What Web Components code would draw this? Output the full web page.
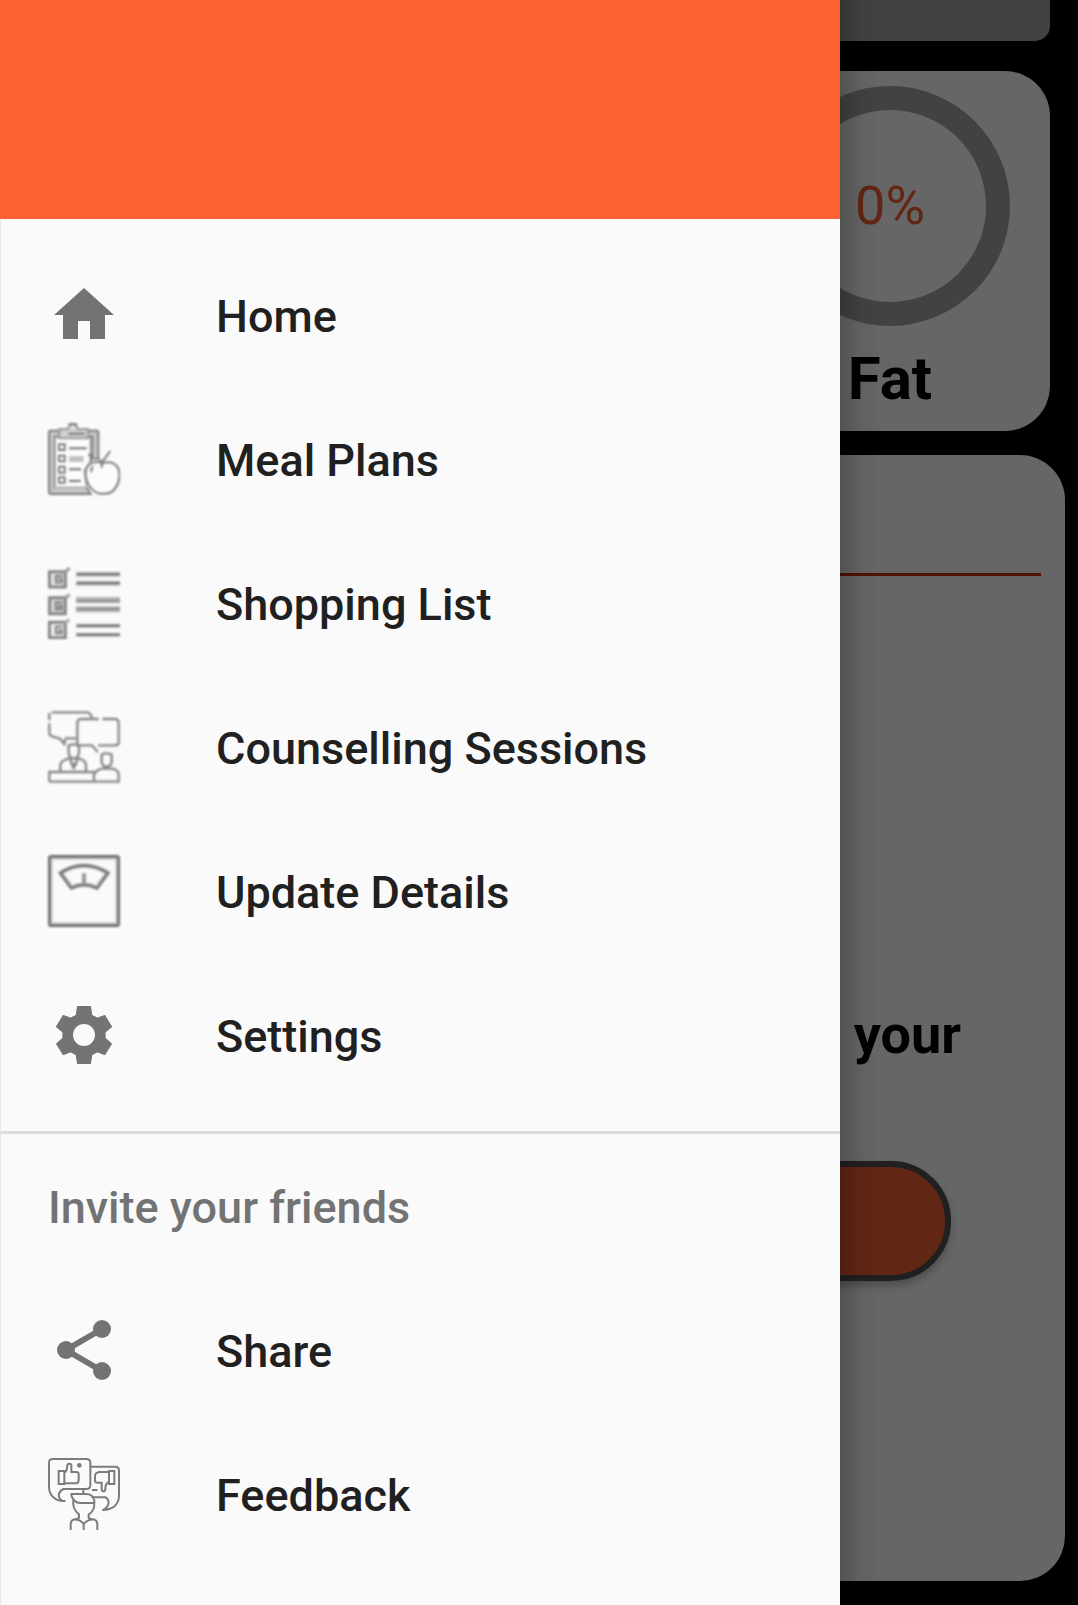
<!DOCTYPE html>
<html lang="en">
<head>
<meta charset="utf-8">
<meta name="viewport" content="width=device-width, initial-scale=1">
<title>Diet Planner</title>
<style>
  html, body { margin: 0; min-height: 100%; background: #000; }
  body { font-family: Roboto, "Liberation Sans", sans-serif; }
</style>
</head>
<body>
<app-shell>
  <dashboard-view></dashboard-view>
  <nav-drawer slot="drawer">
    <nav-item icon="home">Home</nav-item>
    <nav-item icon="meal">Meal Plans</nav-item>
    <nav-item icon="list">Shopping List</nav-item>
    <nav-item icon="talk">Counselling Sessions</nav-item>
    <nav-item icon="scale">Update Details</nav-item>
    <nav-item icon="settings">Settings</nav-item>
    <nav-heading>Invite your friends</nav-heading>
    <nav-item icon="share">Share</nav-item>
    <nav-item icon="feedback">Feedback</nav-item>
  </nav-drawer>
</app-shell>
<script>
const ICONS = {
  home: `<svg viewBox="0 0 24 24"><path fill="#737373" d="M10 20v-6h4v6h5v-8h3L12 3 2 12h3v8z"/></svg>`,
  settings: `<svg viewBox="36 42 216 216"><path fill="#737373" stroke="#737373" stroke-width="4" stroke-linejoin="round" d="M125 65h38l4 26 17 9 22-8 20 33-19 16v19l19 17-20 31-22-8-17 9-4 26h-38l-4-26-17-9-22 8-20-31 19-17v-19l-19-16 20-33 22 8 17-9z"/><circle cx="144" cy="150" r="33" fill="#fafafa"/></svg>`,
  share: `<svg viewBox="0 0 24 24"><path fill="none" stroke="#737373" stroke-width="2" d="M18 5L6 12l12 7"/><g fill="#737373"><circle cx="18" cy="5" r="3"/><circle cx="6" cy="12" r="3"/><circle cx="18" cy="19" r="3"/></g></svg>`,
  meal: `<svg class="soft" viewBox="36 39 216 216">
    <g fill="none" stroke="#7c7c7c" stroke-width="6">
      <path fill="#c6c6c6" d="M39 66q0-4 5-4h138q5 0 5 4v80h-18V80H56v150h94l14 22H45q-6 0-6-6z"/>
      <path fill="#fcfcfc" stroke="#9a9a9a" stroke-width="4" d="M57 82h106v72l-18 28 7 50H57z"/>
      <path stroke="#aaa" d="M57 229l-8 10"/>
      <path fill="#d0d0d0" stroke="#999" d="M70 57h26q3-15 14-15t15 15h31v28H70z"/>
      <path stroke="#777" d="M97 71h49M98 44q10-5 26 0"/>
      <path fill="#fafafa" stroke="none" d="M104 55q6-10 14 0z"/>
      <path d="M69 103h17v17H69zM69 137h17v17H69zM69 170h17v18H69zM69 202h17v16H69z"/>
      <path stroke="#707070" d="M99 115h53M99 178h36M99 213h35"/>
      <path stroke="#c0c0c0" stroke-width="17" d="M99 147h44"/>
      <path fill="#fcfcfc" d="M199 160C180 151 150 158 149 187c-2 31 19 61 45 64 8 1 8-1 16 0 25-1 43-33 40-61-2-30-29-39-51-30z"/>
      <path d="M197 174q-1-17 8-27l18-24M190 148l9 12M156 135h9v20M166 187v-8q0-7 6-9"/>
    </g></svg>`,
  list: `<svg class="soft" viewBox="36 36 216 216">
    <g fill="none" stroke="#858585" stroke-width="9">
      <path fill="#e2e2e2" d="M40 50h48v46H40z"/><path stroke-width="7" d="M80 63H60v19h17v-9H66"/><path stroke="#999" d="M86 52l15-13"/>
      <path fill="#d2d2d2" d="M40 128h48v48H40z"/><path stroke-width="7" d="M80 142H60v20h17v-9H66"/><path stroke="#999" d="M86 130l15-11"/>
      <path fill="#eee" d="M40 202h48v46H40z"/><path stroke-width="7" d="M80 215H60v20h17v-9H66"/><path stroke="#aaa" d="M86 204l14-10"/>
      <path stroke="#c4c4c4" stroke-width="15" d="M120 58h132M120 85h132"/>
      <path stroke="#b4b4b4" stroke-width="18" d="M120 135h132M120 163h132"/>
      <path stroke="#c4c4c4" stroke-width="12" d="M120 212h132M120 239h132"/>
      <path stroke="#666" stroke-width="6" d="M122 58h130M122 85h130M122 212h130M122 239h130"/>
      <path stroke="#8a8a8a" stroke-width="6" d="M122 139h130M122 162h130"/>
    </g></svg>`,
  talk: `<svg class="soft" viewBox="36 33 216 216">
    <g fill="none" stroke="#868686" stroke-width="7">
      <path d="M47 37h107q11 2 14 18M40 39v22M40 70v30q0 7 13 11l19 5 13 16 4-17h31"/>
      <path d="M188 57h-52q-12 0-12 13v66h44l17 20M199 57h37q12 0 12 13v57q0 9-12 9h-50"/>
      <path d="M98 136v20q0 19 15 19t16-19v-20q-15-6-31 0zM73 214v-18q0-15 28-21l12 25 13-25q24 5 24 21v18M104 186l9 18 10-18"/>
      <path d="M197 164q14-8 30 0v23q-3 13-15 13t-15-13zM178 221q4-13 22-15h23q20 0 26 16"/>
      <path d="M40 245V216h134v29M40 245h208v-23"/>
    </g></svg>`,
  scale: `<svg class="soft" viewBox="36 36 216 216">
    <g fill="none">
      <rect x="43" y="43" width="202" height="202" rx="8" stroke="#c8c8c8" stroke-width="14"/>
      <rect x="40" y="40" width="208" height="208" rx="6" stroke="#6c6c6c" stroke-width="8"/>
      <path stroke="#c4c4c4" stroke-width="14" d="M74 90q70-45 141 0l-33 44q-37-19-75 0z"/>
      <path stroke="#707070" stroke-width="7" d="M73 90q71-45 143 0l-33 46q-38-20-77 0z"/>
      <path stroke="#999" stroke-width="12" d="M144 91v33"/>
    </g></svg>`,
  feedback: `<svg viewBox="36 39 216 216"><g fill="none" stroke="#7c7c7c" stroke-width="6" stroke-linecap="round" stroke-linejoin="round">
      <path d="M86 168c-26 2-47-16-47-42V53q0-11 11-11h101q12 0 12 11v67q0 12-12 12H82c-14 7-20 23-4 35"/>
      <path d="M164 65h74q11 0 11 11v75c0 27-18 43-48 44 19-9 22-29 8-38h-40M142 133v14"/>
      <path stroke-linejoin="miter" d="M68 78h17v39H68zM85 83q9-4 9-22 0-5 6-5t6 5v20h15q7 0 7 7v16q0 11-10 11H85M219 78h16v39h-16zM219 81h-30q-12 2-12 13v13q0 6 8 6h12v20q0 6 5 6t6-6c0-14 2-20 11-21"/>
      <path d="M170 135h12"/><circle cx="130" cy="61" r="4" fill="#7c7c7c"/>
      <path d="M106 151q7 22 27 23h42v-7q-3-20-26-20H106zM112 165q-4 27 17 43v9q-2 6-10 6M175 175q1 22-17 34v8q2 6 10 6"/>
      <path stroke-linecap="butt" d="M104 255v-18q1-13 14-14 14 1 25 14 12-13 26-14 14 1 15 14v18M143 237v18"/>
    </g></svg>`
};

function define(name, html, setup) {
  const template = document.createElement('template');
  template.innerHTML = html;
  customElements.define(name, class extends HTMLElement {
    constructor() {
      super();
      this.attachShadow({ mode: 'open' }).append(template.content.cloneNode(true));
    }
    connectedCallback() { if (setup) setup(this, this.shadowRoot); }
  });
}

define('app-shell', `
  <style>
    :host { display: block; position: relative; min-height: 100vh; overflow: hidden; }
    .scrim { position: absolute; inset: 0; background: rgba(0,0,0,.6); }
  </style>
  <slot></slot><div class="scrim"></div><slot name="drawer"></slot>`);

define('nav-drawer', `
  <style>
    :host { position: absolute; top: 0; bottom: 0; left: 0; width: 840px; max-width: calc(100% - 168px); background: #fafafa; }
    :host::after { content: ""; position: absolute; left: 100%; top: 0; bottom: 0; width: 40px;
      background: linear-gradient(90deg, rgba(0,0,0,.2), rgba(0,0,0,.06) 50%, transparent); }
    header { height: 219px; background: #fd6232; }
    nav { box-sizing: border-box; min-height: calc(100% - 219px); padding: 24px 0; box-shadow: inset 1px 0 #e6e6e6; }
  </style>
  <header></header><nav aria-label="Main"><slot></slot></nav>`);

define('nav-item', `
  <style>
    :host { display: block; }
    a { display: flex; align-items: center; gap: 96px; height: 144px; padding: 0 48px; color: #202020;
      font-size: 45px; font-weight: 500; line-height: 60px; text-decoration: none; }
    .icon { flex: none; width: 72px; height: 72px; }
    .label { padding-top: 4px; }
    svg { display: block; width: 100%; height: 100%; }
    svg.soft { filter: blur(1px); }
  </style>
  <a href="#"><span class="icon" aria-hidden="true"></span><span class="label"><slot></slot></span></a>`,
  (host, root) => { root.querySelector('.icon').innerHTML = ICONS[host.getAttribute('icon')]; });

define('nav-heading', `
  <style>
    :host { display: block; margin-top: 24px; border-top: 3px solid #dcdcdc; }
    h2 { display: flex; align-items: center; box-sizing: border-box; height: 144px; margin: 0; padding: 4px 48px 0;
      color: #737373; font-size: 45px; font-weight: 500; line-height: 60px; }
  </style>
  <h2><slot></slot></h2>`);

define('progress-ring', `
  <style>
    :host { display: flex; align-items: center; justify-content: center; box-sizing: border-box;
      width: 240px; height: 240px; border: 24px solid #a5a5a5; border-radius: 50%;
      color: #f55f32; font-size: 54px; line-height: 60px; }
  </style>
  <span><slot></slot></span>`);

define('stat-card', `
  <style>
    :host { display: flex; flex-direction: column; align-items: center; gap: 16px; box-sizing: border-box;
      width: 320px; padding: 15px 0 16px; border-radius: 45px; background: #fff; color: #000; }
    h3 { margin: 0; font-size: 60px; font-weight: 700; line-height: 73px; }
  </style>
  <slot name="chart"></slot><h3><slot></slot></h3>`);

define('plan-card', `
  <style>
    :host { display: flex; flex-direction: column; box-sizing: border-box; min-height: 1126px;
      padding: 118px 24px 0; border-radius: 45px; background: #fff; color: #000; }
    hr { width: 100%; height: 3px; margin: 0; border: 0; background: #c53000; }
    p { margin: 427px 80px 0; font-size: 54px; font-weight: 700; line-height: 64px; text-align: right; }
    button { height: 120px; margin: 94px 90px 0; border: 6px solid #505050; border-radius: 60px;
      background: #f55f32; box-shadow: 0 5px 9px rgba(0,0,0,.25); }
  </style>
  <hr><p><slot></slot></p><button type="button" aria-label="Start"></button>`);

define('dashboard-view', `
  <style>
    :host { display: flex; flex-direction: column; padding-bottom: 24px; }
    .banner { height: 41px; margin: 0 28px; border-radius: 0 0 15px 15px; background: #a5a5a5; }
    .stats { display: flex; justify-content: flex-end; margin: 30px 28px 24px; }
    plan-card { margin: 0 13px; }
  </style>
  <div class="banner"></div>
  <div class="stats"><stat-card><progress-ring slot="chart">0%</progress-ring>Fat</stat-card></div>
  <plan-card>your</plan-card>`);
</script>
</body>
</html>
